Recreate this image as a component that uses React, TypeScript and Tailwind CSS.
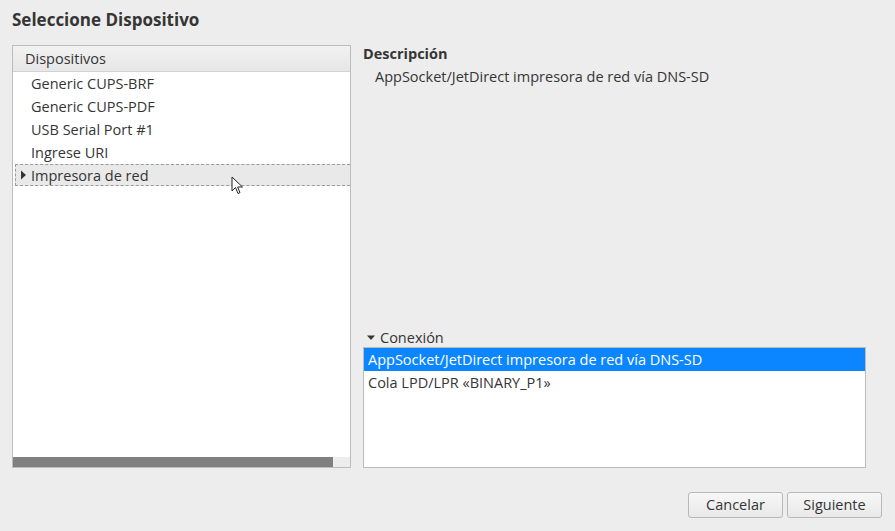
import React from 'react';

const devices = ['Generic CUPS-BRF', 'Generic CUPS-PDF', 'USB Serial Port #1', 'Ingrese URI'];

export default function App() {
  return (
    <div className="relative w-[895px] h-[531px] bg-[#ededed] text-[#353535] font-['Open_Sans',sans-serif] text-[14.5px] overflow-hidden">
      {/* Title */}
      <div className="h-[45px] pl-[12px] pt-[9px] text-[17px] font-bold leading-[22px]">Seleccione Dispositivo</div>

      <div className="flex px-[12px] gap-[12px]">
        {/* Devices tree */}
        <div className="w-[339px] h-[423px] border border-[#bcbcbc] bg-white flex flex-col">
          <div className="h-[26px] bg-gradient-to-b from-[#f2f2f2] to-[#e6e6e6] border-b border-[#d2d2d2] pl-[12px] leading-[25px]">
            Dispositivos
          </div>
          <div className="flex-1">
            {devices.map(d => (
              <div key={d} className="h-[23px] pl-[18px] leading-[23px]">{d}</div>
            ))}
            <div className="h-[22px] ml-[2px] border border-dashed border-r-0 border-[#9a9a9a] bg-[#e9e9e9] flex items-center">
              <svg width="12" height="10" viewBox="0 0 12 10" className="ml-[2px] mr-[1px]">
                <path d="M3 0.5 L8 5 L3 9.5 Z" fill="#353535" />
              </svg>
              <span className="leading-[21px]">Impresora de red</span>
            </div>
          </div>
          <div className="h-[10px] flex bg-[#ededed]">
            <div className="w-[320px] bg-[#808080]" />
          </div>
        </div>

        {/* Right side */}
        <div className="w-[503px] h-[423px] flex flex-col">
          <div className="font-bold leading-[18px]">Descripción</div>
          <div className="pl-[12px] pt-[5px] leading-[18px]">AppSocket/JetDirect impresora de red vía DNS-SD</div>
          <div className="flex-1" />
          <div className="flex items-center h-[18px]">
            <svg width="12" height="10" viewBox="0 0 12 10" className="ml-[3px] mr-[2px]">
              <path d="M1 2.5 L9 2.5 L5 7 Z" fill="#353535" />
            </svg>
            <span>Conexión</span>
          </div>
          <div className="h-[121px] border border-[#bcbcbc] bg-white">
            <div className="h-[23px] bg-[#0c86ff] text-white pl-[4px] leading-[23px]">
              AppSocket/JetDirect impresora de red vía DNS-SD
            </div>
            <div className="h-[23px] pl-[4px] leading-[23px]">Cola LPD/LPR «BINARY_P1»</div>
          </div>
        </div>
      </div>

      {/* Buttons */}
      <div className="flex justify-end gap-[4px] pr-[13px] pt-[24px]">
        <button className="w-[95px] h-[26px] rounded-[3px] border border-[#b8b8b8] bg-gradient-to-b from-[#f7f7f7] to-[#e9e9e9] text-[#353535] leading-[24px]">
          Cancelar
        </button>
        <button className="w-[95px] h-[26px] rounded-[3px] border border-[#b8b8b8] bg-gradient-to-b from-[#f7f7f7] to-[#e9e9e9] text-[#353535] leading-[24px]">
          Siguiente
        </button>
      </div>

      {/* Mouse cursor */}
      <svg className="absolute left-[231px] top-[176px]" width="14" height="20" viewBox="0 0 14 20">
        <path d="M1 1 L1 15 L4.5 11.5 L7 17.5 L9 16.6 L6.6 11 L11.5 11 Z" fill="white" stroke="#222" strokeWidth="1" strokeLinejoin="round" />
      </svg>
    </div>
  );
}
